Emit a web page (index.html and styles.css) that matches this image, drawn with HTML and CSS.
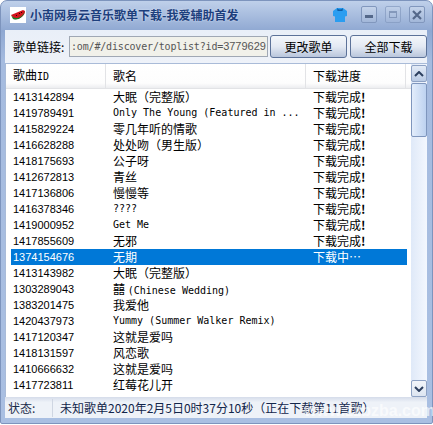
FILE: index.html
```html
<!DOCTYPE html>
<html lang="zh-CN">
<head>
  <meta charset="UTF-8">
  <meta name="viewport" content="width=device-width, initial-scale=1.0">
  <title>小南网易云音乐歌单下载</title>
  <link rel="stylesheet" href="styles.css">
</head>
<body>
  <div class="window">
    <div class="title-bar">
      <div class="logo">
        <svg width="16" height="16" viewBox="0 0 16 16">
          <path d="M1 8 L13 3 L15 4 C15 9 9 13 4 12 Z" fill="#d3121c"/>
          <path d="M1 8 C4 13 12 12 15 4 C14 10 8 14 3 12 Z" fill="#1c7a26"/>
          <path d="M6 8 l1 1 M9 6 l1 1 M11 5 l1 1" stroke="#300" stroke-width="1"/>
        </svg>
      </div>
      <div class="title-text">小南网易云音乐歌单下载-我爱辅助首发</div>
      <svg class="shirt" width="16" height="16" viewBox="0 0 16 16">
        <path d="M5 1 H11 L15 4 V9 L13 9.500 V15 H3 V9.500 L1 9 V4 Z" fill="#2a9df0"/>
        <path d="M5 1 Q8 4 11 1 L10.500 4 H5.500 Z" fill="#0b5fa8"/>
      </svg>
      <div class="win-btn"><span class="min-mark"></span></div>
      <div class="win-btn faded"><span class="max-mark"></span></div>
      <div class="win-btn">
        <svg width="12" height="12" viewBox="0 0 12 12"><path d="M2 2 L10 10 M10 2 L2 10" stroke="#54688a" stroke-width="2.200"/></svg>
      </div>
    </div>

    <div class="toolbar">
      <span class="link-label">歌单链接:</span>
      <div class="link-input">:om/#/discover/toplist?id=<span class="link-num">3779629</span></div>
      <button class="tool-btn">更改歌单</button>
      <button class="tool-btn">全部下载</button>
    </div>

    <div class="list-area">
      <div class="list">
        <div class="row head">
          <div class="col-id">歌曲<span class="en">ID</span></div>
          <div class="col-name">歌名</div>
          <div class="col-state">下载进度</div>
        </div>
        <div class="row"><div class="col-id">1413142894</div><div class="col-name">大眠&#xFF08;完整版&#xFF09;</div><div class="col-state">下载完成<b>!</b></div></div>
        <div class="row"><div class="col-id">1419789491</div><div class="col-name en">Only The Young (Featured in ...</div><div class="col-state">下载完成<b>!</b></div></div>
        <div class="row"><div class="col-id">1415829224</div><div class="col-name">零几年听的情歌</div><div class="col-state">下载完成<b>!</b></div></div>
        <div class="row"><div class="col-id">1416628288</div><div class="col-name">处处吻&#xFF08;男生版&#xFF09;</div><div class="col-state">下载完成<b>!</b></div></div>
        <div class="row"><div class="col-id">1418175693</div><div class="col-name">公子呀</div><div class="col-state">下载完成<b>!</b></div></div>
        <div class="row"><div class="col-id">1412672813</div><div class="col-name">青丝</div><div class="col-state">下载完成<b>!</b></div></div>
        <div class="row"><div class="col-id">1417136806</div><div class="col-name">慢慢等</div><div class="col-state">下载完成<b>!</b></div></div>
        <div class="row"><div class="col-id">1416378346</div><div class="col-name en">????</div><div class="col-state">下载完成<b>!</b></div></div>
        <div class="row"><div class="col-id">1419000952</div><div class="col-name en">Get Me</div><div class="col-state">下载完成<b>!</b></div></div>
        <div class="row"><div class="col-id">1417855609</div><div class="col-name">无邪</div><div class="col-state">下载完成<b>!</b></div></div>
        <div class="row selected"><div class="col-id">1374154676</div><div class="col-name">无期</div><div class="col-state">下载中…</div></div>
        <div class="row"><div class="col-id">1413143982</div><div class="col-name">大眠&#xFF08;完整版&#xFF09;</div><div class="col-state"></div></div>
        <div class="row"><div class="col-id">1303289043</div><div class="col-name">囍 <span class="en">(Chinese Wedding)</span></div><div class="col-state"></div></div>
        <div class="row"><div class="col-id">1383201475</div><div class="col-name">我爱他</div><div class="col-state"></div></div>
        <div class="row"><div class="col-id">1420437973</div><div class="col-name en">Yummy (Summer Walker Remix)</div><div class="col-state"></div></div>
        <div class="row"><div class="col-id">1417120347</div><div class="col-name">这就是爱吗</div><div class="col-state"></div></div>
        <div class="row"><div class="col-id">1418131597</div><div class="col-name">风恋歌</div><div class="col-state"></div></div>
        <div class="row"><div class="col-id">1410666632</div><div class="col-name">这就是爱吗</div><div class="col-state"></div></div>
        <div class="row"><div class="col-id">1417723811</div><div class="col-name">红莓花儿开</div><div class="col-state"></div></div>
      </div>
      <div class="scrollbar">
        <div class="scroll-btn">
          <svg width="10" height="6" viewBox="0 0 10 6"><path d="M1 5 L5 1 L9 5" fill="none" stroke="#2c3f5f" stroke-width="2"/></svg>
        </div>
        <div class="scroll-thumb"></div>
        <div class="scroll-btn bottom">
          <svg width="10" height="6" viewBox="0 0 10 6"><path d="M1 1 L5 5 L9 1" fill="none" stroke="#2c3f5f" stroke-width="2"/></svg>
        </div>
      </div>
    </div>

    <div class="status-bar">
      <div class="status-label">状态:</div>
      <div class="status-text">未知歌单2020年2月5日0时37分10秒&#xFF08;正在下载第11首歌&#xFF09;</div>
    </div>
  </div>
  <div class="watermark">www.zzbzba.com</div>
</body>
</html>
```

FILE: styles.css
```css
html, body {
  margin: 0;
  padding: 0;
  background: #fff;
}

body {
  width: 433px;
  height: 425px;
  overflow: hidden;
  position: relative;
  font-family: "Noto Sans CJK SC", "Liberation Sans", sans-serif;
  font-size: 12px;
  color: #000;
}

.window {
  width: 433px;
  height: 424px;
  display: flex;
  flex-direction: column;
  box-sizing: border-box;
  padding: 0 5px 5px 4px;
  border-radius: 7px 7px 2px 2px;
  border: 1px solid #7d94bd;
  background: linear-gradient(#bfd0ea 0, #8fa8d2 30px, #a5bbdf 60px, #a9bfe2 100%);
}

.title-bar {
  height: 29px;
  flex: none;
  display: flex;
  align-items: center;
  padding: 0 2px 2px 5px;
  box-sizing: border-box;
}

.logo {
  width: 16px;
  height: 16px;
  margin-right: 4px;
  background: #fff;
}

.title-text {
  flex: 1;
  font-weight: bold;
  color: #1d3f7d;
  text-shadow: 0 0 2px #dfe9f8;
  line-height: 16px;
}

.shirt {
  margin-right: 5px;
}

.win-btn {
  width: 14px;
  height: 15px;
  margin-left: 8px;
  display: flex;
  align-items: center;
  justify-content: center;
  border: 1px solid #8197bd;
  border-radius: 2px;
  background: linear-gradient(#c4d3ea, #a2b7d9);
}

.win-btn.faded {
  opacity: 0.65;
}

.min-mark {
  width: 8px;
  height: 3px;
  margin-top: 3px;
  background: #54688a;
}

.max-mark {
  width: 8px;
  height: 7px;
  box-sizing: border-box;
  border: 1px solid #6f84a8;
  border-top-width: 2px;
}

.toolbar {
  height: 33px;
  flex: none;
  display: flex;
  align-items: center;
  padding: 0 0 0 8px;
  background: linear-gradient(#e9eff8, #eef2f9);
  box-sizing: border-box;
}

.link-label {
  width: 56px;
  flex: none;
}

.link-input {
  width: 199px;
  height: 21px;
  flex: none;
  box-sizing: border-box;
  border: 1px solid #a0a8b4;
  background: #f1f1ea;
  color: #555;
  font-family: "DejaVu Sans Mono", monospace;
  font-size: 10px;
  letter-spacing: -0.17px;
  line-height: 19px;
  padding-left: 1px;
  overflow: hidden;
  white-space: nowrap;
}

.link-num {
  font-family: "Liberation Sans", sans-serif;
  font-size: 11px;
  letter-spacing: 0;
}

.tool-btn {
  width: 77px;
  height: 23px;
  margin-left: 3px;
  padding: 0;
  font: inherit;
  color: #000;
  border: 1px solid #5c7299;
  border-radius: 3px;
  background: linear-gradient(#f4f7fb, #e3e9f3 50%, #b9c6dc);
}

.link-input + .tool-btn {
  margin-left: 2px;
}

.list-area {
  flex: 1;
  display: flex;
  min-height: 0;
  background: #fff;
  border-top: 1px solid #a9bbd8;
  border-left: 1px solid #a9bbd8;
}

.list {
  flex: 1;
  min-width: 0;
  overflow: hidden;
}

.row {
  display: flex;
  height: 16px;
  line-height: 16px;
  margin-left: 5px;
  margin-right: 4px;
}

.row.head {
  height: 25px;
  line-height: 24px;
  margin: 0;
  padding-left: 5px;
  box-sizing: border-box;
  background: linear-gradient(#fff, #fdfdfd 80%, #ecedf0);
  border-bottom: 1px solid #e2e3e6;
}

.col-id {
  width: 95px;
  flex: none;
  padding-left: 2px;
  box-sizing: border-box;
  font-family: "Liberation Sans", "Noto Sans CJK SC", sans-serif;
  font-size: 11px;
}

.col-name {
  width: 200px;
  flex: none;
  padding-left: 7px;
  box-sizing: border-box;
  white-space: nowrap;
  overflow: hidden;
}

.col-state {
  width: 100px;
  flex: none;
  padding-left: 7px;
  box-sizing: border-box;
}

.head .col-id,
.head .col-name,
.head .col-state {
  border-right: 1px solid #e2e3e6;
  font-size: 12px;
}

.en {
  font-family: "DejaVu Sans Mono", monospace;
  font-size: 10px;
}

.selected {
  background: #0078d7;
  color: #fff;
}

.scrollbar {
  width: 16px;
  flex: none;
  display: flex;
  flex-direction: column;
  box-sizing: border-box;
  padding-top: 1px;
  background: linear-gradient(90deg, #dfe9f8, #f3f7fe);
}

.scroll-btn {
  height: 17px;
  flex: none;
  display: flex;
  align-items: center;
  justify-content: center;
  box-sizing: border-box;
  border: 1px solid #8ea2c4;
  border-radius: 2px;
  background: linear-gradient(#e3ebf7, #b9cae4);
}

.scroll-btn.bottom {
  background: linear-gradient(#f2f5fa, #dde5f1);
}

.scroll-thumb {
  height: 54px;
  margin-top: 1px;
  box-sizing: border-box;
  border: 1px solid #7f96bd;
  border-radius: 2px;
  background: linear-gradient(90deg, #e3edfb, #bdd2f0);
  flex: none;
}

.scrollbar .bottom {
  margin-top: auto;
}

.status-bar {
  height: 21px;
  flex: none;
  display: flex;
  align-items: center;
  background: linear-gradient(#d5dcea, #eef2f8 25%, #eef2f8);
}

.status-label {
  width: 48px;
  flex: none;
  padding-left: 3px;
  color: #1b2c4a;
  box-sizing: border-box;
  border-right: 1px solid #cfd6e2;
  height: 18px;
  line-height: 18px;
}

.status-text {
  padding-left: 7px;
  color: #12254a;
  white-space: nowrap;
}

/* site watermark sitting over the screenshot */
.watermark {
  position: absolute;
  left: 304px;
  top: 402px;
  font-family: "Liberation Sans", sans-serif;
  font-size: 16px;
  font-weight: bold;
  color: rgba(255, 255, 255, 0.65);
}
```
